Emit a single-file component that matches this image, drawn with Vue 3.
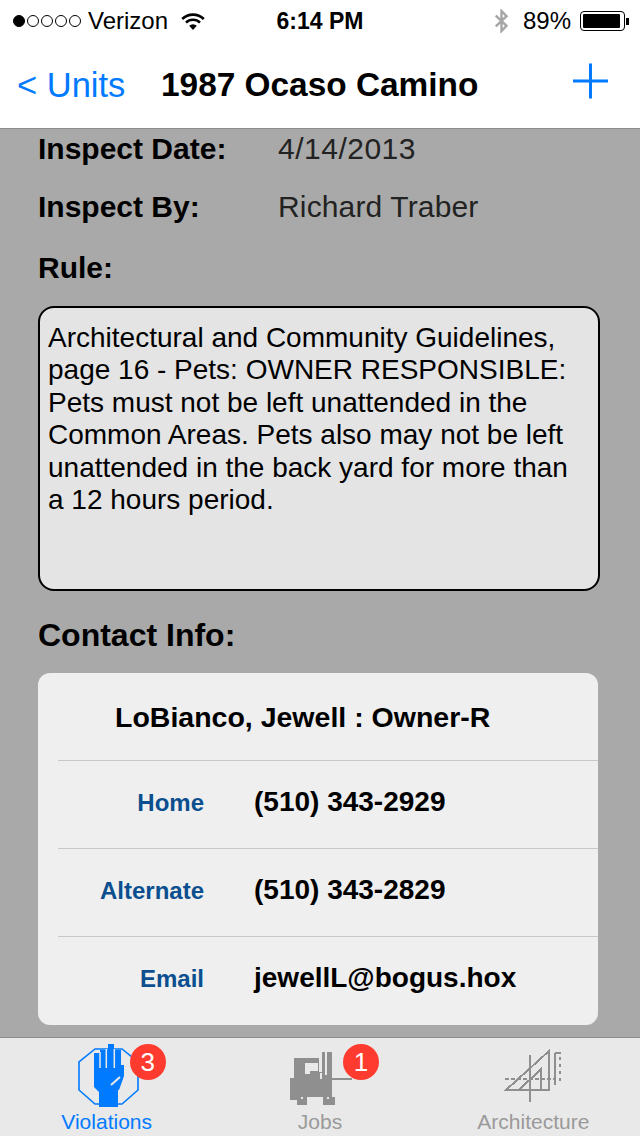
<script setup>
const contacts = [
  { label: 'Home', value: '(510) 343-2929' },
  { label: 'Alternate', value: '(510) 343-2829' },
  { label: 'Email', value: 'jewellL@bogus.hox' },
]
</script>

<template>
  <div class="screen">
    <div class="status">
      <div class="status-left">
        <span class="dots">
          <i class="dot full"></i><i class="dot"></i><i class="dot"></i><i class="dot"></i><i class="dot"></i>
        </span>
        <span class="carrier">Verizon</span>
        <svg class="wifi" width="24" height="18" viewBox="0 0 24 18">
          <path d="M1.2 7 A15.5 15.5 0 0 1 22.8 7" fill="none" stroke="#000" stroke-width="2.6" />
          <path d="M5 10.6 A10 10 0 0 1 19 10.6" fill="none" stroke="#000" stroke-width="2.6" />
          <path d="M8.2 13.8 L12 18 L15.8 13.8 A5.4 5.4 0 0 0 8.2 13.8 Z" fill="#000" />
        </svg>
      </div>
      <div class="time">6:14 PM</div>
      <div class="status-right">
        <svg class="bt" width="13" height="24" viewBox="0 0 13 24">
          <path d="M0.8 6.5 L11.5 16.8 L6.5 22 V2 L11.5 7.2 L0.8 17.5" fill="none" stroke="#a6a6a6" stroke-width="2.4" />
        </svg>
        <span class="pct">89%</span>
        <span class="battery"><span class="battery-fill"></span></span>
        <span class="battery-tip"></span>
      </div>
    </div>

    <div class="nav">
      <div class="back">&lt; Units</div>
      <div class="title">1987 Ocaso Camino</div>
      <svg class="plus" width="36" height="36" viewBox="0 0 36 36">
        <path d="M18.5 0.5 V35.5 M1 18 H36" stroke="#007aff" stroke-width="3" />
      </svg>
    </div>

    <div class="body">
      <div class="field first">
        <span class="field-label">Inspect Date:</span>
        <span class="field-value date">4/14/2013</span>
      </div>
      <div class="field second">
        <span class="field-label">Inspect By:</span>
        <span class="field-value">Richard Traber</span>
      </div>
      <div class="rule-label">Rule:</div>
      <div class="rule">
        Architectural and Community Guidelines, page 16 - Pets: OWNER RESPONSIBLE: Pets must not be left unattended in the Common Areas. Pets also may not be left unattended in the back yard for more than a 12 hours period.
      </div>
      <div class="contact-label">Contact Info:</div>
      <div class="card">
        <div class="card-name">LoBianco, Jewell : Owner-R</div>
        <div v-for="c in contacts" :key="c.label" class="card-row">
          <span class="row-label">{{ c.label }}</span>
          <span class="row-value">{{ c.value }}</span>
        </div>
      </div>
    </div>

    <div class="tabs">
      <div class="tab active">
        <div class="icon-wrap">
          <svg width="64" height="66" viewBox="0 0 64 66">
            <path d="M20 6 H47 L63 19 V47 L47 61 H20 L4 47 V19 Z" fill="none" stroke="#007aff" stroke-width="1.6" />
            <path d="M19 10 H25 V7 H33 V1 H39 V7 H46 V22 H49 V33 L44 47 H43 V64 H24 V49 L19 44 Z" fill="#007aff" />
            <path d="M25 9 V25 M31.3 6 V25 M39.3 6 V25" stroke="#e9e9e9" stroke-width="1.5" />
            <path d="M36 42 L45 34" stroke="#e9e9e9" stroke-width="2" />
          </svg>
          <span class="badge">3</span>
        </div>
        <span class="tab-label">Violations</span>
      </div>
      <div class="tab">
        <div class="icon-wrap">
          <svg width="64" height="66" viewBox="0 0 64 66" shape-rendering="crispEdges">
            <path d="M6 15 H31 V29 H34 V9 H44 V54 H47 V62 H35 V54 H19 V62 H9 V57 H2 V35 H6 Z" fill="#8f8f8f" />
            <path d="M17 20 H30 V28 H22 V31 H17 Z" fill="#e9e9e9" />
            <path d="M38 9 V32 M33 30 V36" stroke="#e9e9e9" stroke-width="1.5" />
            <path d="M13 54 H15 V56 H13 Z M39 54 H41 V56 H39 Z" fill="#e9e9e9" />
            <path d="M44 36 H64" stroke="#8f8f8f" stroke-width="2" />
          </svg>
          <span class="badge">1</span>
        </div>
        <span class="tab-label">Jobs</span>
      </div>
      <div class="tab">
        <div class="icon-wrap">
          <svg width="64" height="66" viewBox="0 0 64 66" fill="none" stroke="#8f8f8f" stroke-width="2" shape-rendering="crispEdges">
            <path d="M48 8 V47 H5 Z" />
            <path d="M40 26 V47 H18 Z" />
            <path d="M29 12 V59" />
            <path d="M4 36 H53" stroke-dasharray="4 2" />
            <path d="M54 10 V42 M54 10 H60" />
            <path d="M59 14 V39" stroke-dasharray="3 4" />
          </svg>
        </div>
        <span class="tab-label">Architecture</span>
      </div>
    </div>
  </div>
</template>

<style scoped>
.screen {
  width: 640px;
  height: 1136px;
  display: flex;
  flex-direction: column;
  overflow: hidden;
  background: #a9a9a9;
  font-family: 'Liberation Sans', Arial, sans-serif;
  color: #000;
}
.status {
  height: 40px;
  flex-shrink: 0;
  background: #fff;
  display: flex;
  align-items: center;
  justify-content: space-between;
  padding: 2px 11px 0 13px;
  box-sizing: border-box;
  font-size: 24px;
  position: relative;
}
.status-left,
.status-right {
  display: flex;
  align-items: center;
}
.dots {
  display: flex;
  gap: 2px;
  margin-right: 7px;
}
.dot {
  width: 12px;
  height: 12px;
  border: 1px solid #000;
  border-radius: 50%;
  box-sizing: border-box;
}
.dot.full {
  background: #000;
}
.wifi {
  margin-left: 13px;
}
.time {
  position: absolute;
  left: 226px;
  width: 188px;
  text-align: center;
  font-weight: bold;
  font-size: 23px;
}
.bt {
  margin-right: 15px;
}
.pct {
  margin-right: 9px;
}
.battery {
  width: 45px;
  height: 20px;
  border: 1px solid #000;
  border-radius: 4px;
  padding: 2px;
  box-sizing: border-box;
  display: flex;
}
.battery-fill {
  width: 37px;
  background: #000;
  border-radius: 1px;
}
.battery-tip {
  width: 3px;
  height: 7px;
  margin-left: 1px;
  background: #000;
}
.nav {
  height: 89px;
  flex-shrink: 0;
  background: #fff;
  border-bottom: 1px solid #8c8c8c;
  box-sizing: border-box;
  display: flex;
  align-items: center;
  padding: 2px 50px 0 17px;
}
.back {
  width: 144px;
  font-size: 34.5px;
  color: #007aff;
}
.title {
  font-size: 33.4px;
  font-weight: bold;
  flex: 1;
}
.plus {
  margin-right: -18px;
  margin-bottom: 9px;
}
.body {
  flex: 1;
  padding: 0 40px 0 38px;
  min-height: 0;
}
.field {
  display: flex;
  align-items: center;
  height: 42px;
}
.field.first {
  height: 40px;
}
.field.second {
  margin-top: 17px;
}
.field-label {
  width: 240px;
  font-size: 30px;
  font-weight: bold;
}
.field-value {
  font-size: 30px;
  letter-spacing: 0.15px;
  color: #222;
}
.field-value.date {
  letter-spacing: 0.5px;
}
.rule-label {
  margin-top: 22px;
  font-size: 30px;
  font-weight: bold;
  height: 36px;
  line-height: 36px;
}
.rule {
  margin-top: 20px;
  height: 285px;
  width: 562px;
  box-sizing: border-box;
  background: #e4e4e4;
  border: 2px solid #000;
  border-radius: 16px;
  padding: 14px 8px;
  font-size: 28px;
  line-height: 32.4px;
}
.contact-label {
  margin-top: 24px;
  font-size: 32px;
  font-weight: bold;
  height: 40px;
  line-height: 40px;
}
.card {
  margin-top: 18px;
  width: 560px;
  height: 352px;
  background: #efefef;
  border-radius: 12px;
  overflow: hidden;
}
.card-name {
  height: 87px;
  line-height: 88px;
  padding-left: 77px;
  font-size: 28.5px;
  font-weight: bold;
}
.card-row {
  height: 88px;
  margin-left: 20px;
  padding-bottom: 4px;
  border-top: 1px solid #c8c8c8;
  box-sizing: border-box;
  display: flex;
  align-items: center;
}
.row-label {
  width: 146px;
  text-align: right;
  font-size: 24px;
  font-weight: bold;
  color: #0b4f8f;
}
.row-value {
  margin-left: 50px;
  margin-bottom: 2px;
  font-size: 28px;
  font-weight: bold;
}
.tabs {
  height: 99px;
  flex-shrink: 0;
  background: #e9e9e9;
  border-top: 1px solid #8c8c8c;
  box-sizing: border-box;
  display: flex;
}
.tab {
  flex: 1;
  display: flex;
  flex-direction: column;
  align-items: center;
  color: #9a9a9a;
}
.tab.active {
  color: #007aff;
}
.icon-wrap {
  position: relative;
  width: 64px;
  height: 66px;
  margin-top: 5px;
}
.badge {
  position: absolute;
  left: 55px;
  top: 1px;
  width: 36px;
  height: 36px;
  border-radius: 50%;
  background: #ff3b30;
  color: #fff;
  font-size: 26px;
  line-height: 36px;
  text-align: center;
}
.tab-label {
  font-size: 21px;
  line-height: 26px;
}
</style>
